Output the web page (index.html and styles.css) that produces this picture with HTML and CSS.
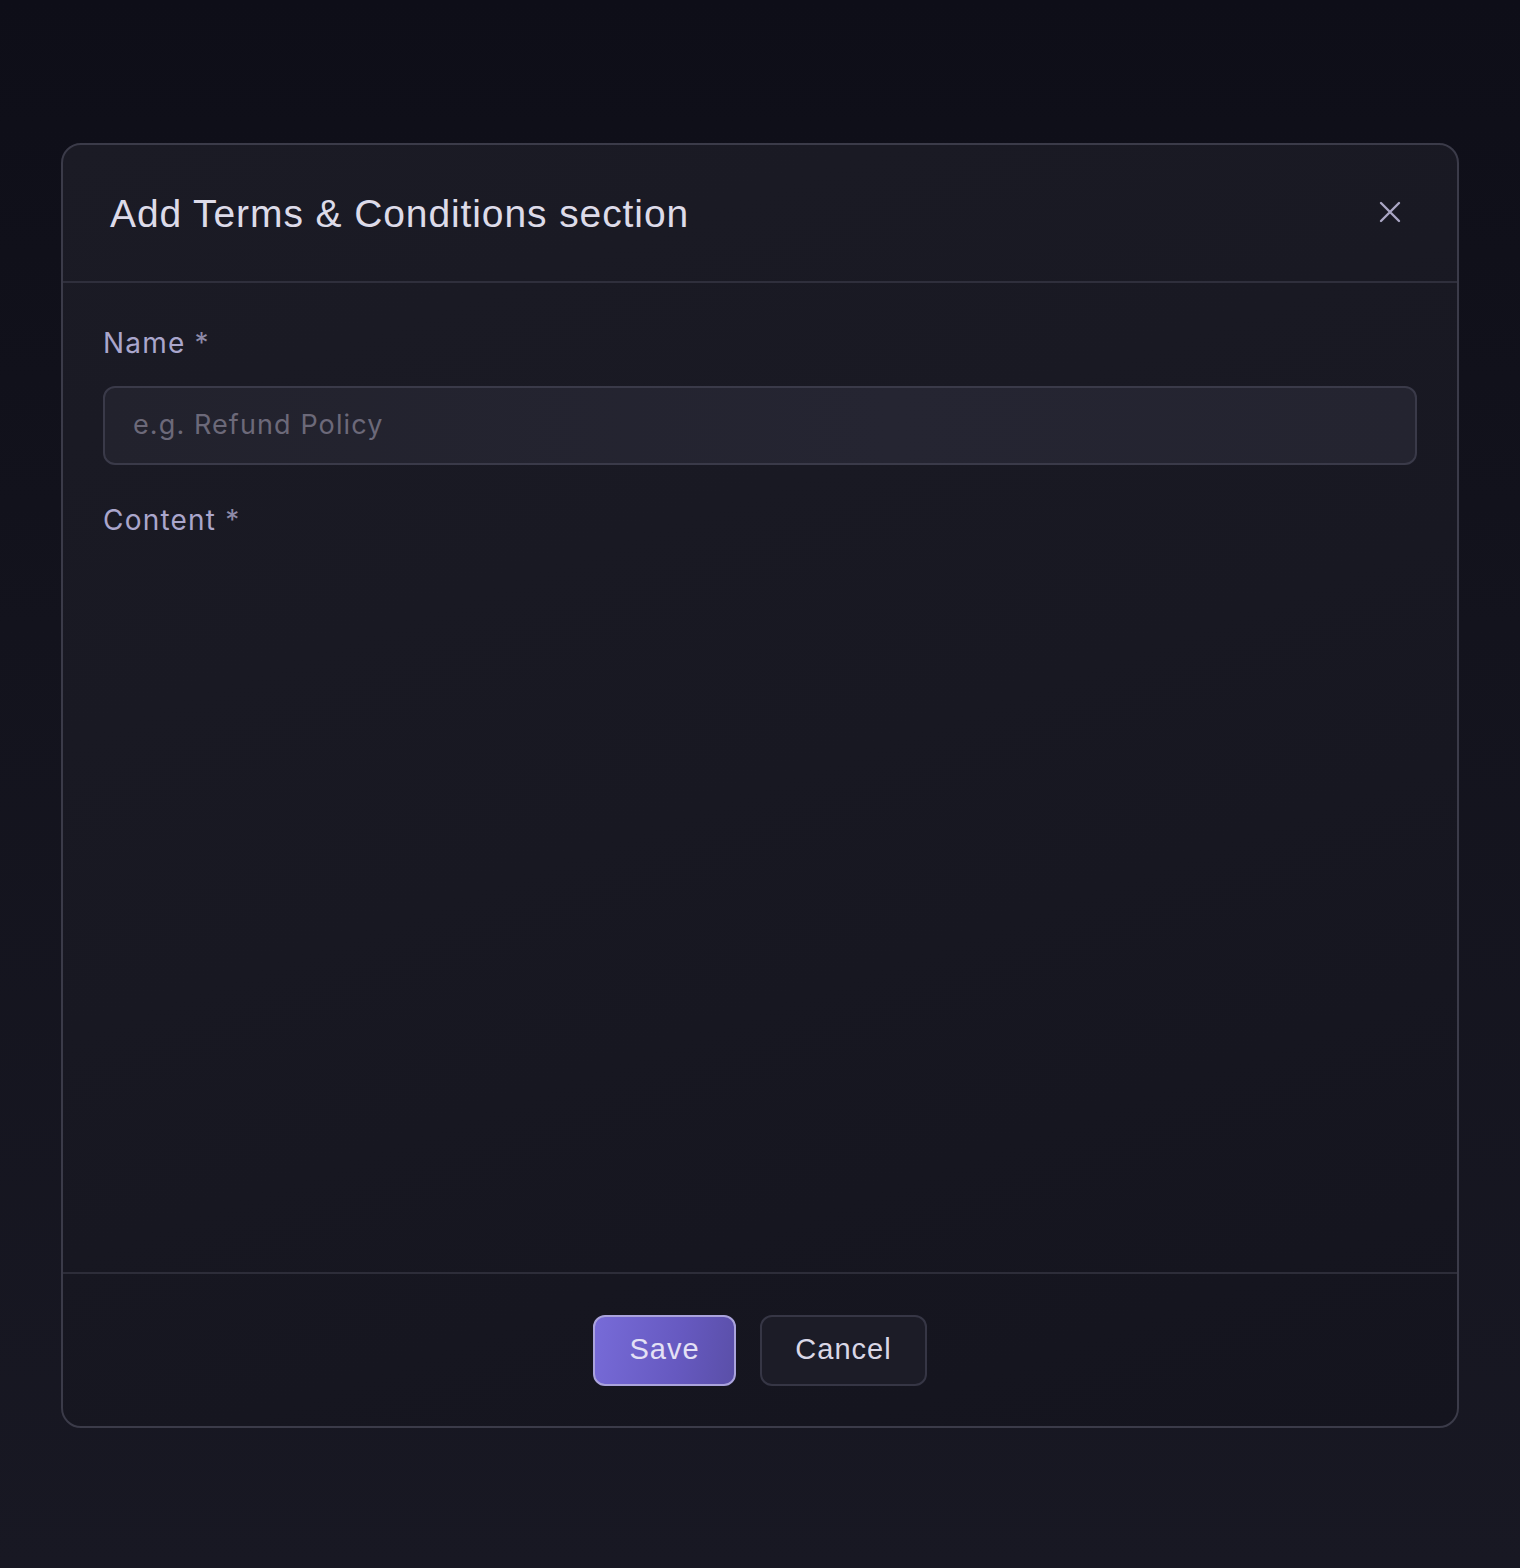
FILE: index.html
```html
<!DOCTYPE html>
<html lang="en">
<head>
<meta charset="utf-8">
<title>Add Terms &amp; Conditions section</title>
<link rel="stylesheet" href="styles.css">
</head>
<body>
<div class="backdrop">
  <div class="modal" role="dialog" aria-labelledby="modal-title">
    <header class="modal-header">
      <h2 id="modal-title" class="modal-title">Add Terms &amp; Conditions section</h2>
      <button class="close-btn" aria-label="Close">
        <svg width="22" height="22" viewBox="0 0 22 22" fill="none" stroke="currentColor" stroke-width="2.4" stroke-linecap="round">
          <path d="M2 2 L20 20 M20 2 L2 20"/>
        </svg>
      </button>
    </header>
    <div class="modal-body">
      <div class="field">
        <label class="label">Name <span class="req">*</span></label>
        <div class="input"><span class="placeholder">e.g. Refund Policy</span></div>
      </div>
      <div class="field">
        <label class="label">Content <span class="req">*</span></label>
      </div>
    </div>
    <footer class="modal-footer">
      <button class="btn btn-primary">Save</button>
      <button class="btn btn-secondary">Cancel</button>
    </footer>
  </div>
</div>
</body>
</html>
```

FILE: styles.css
```css
* { box-sizing: border-box; }
html, body { margin: 0; padding: 0; }
body {
  width: 1520px;
  height: 1568px;
  background: linear-gradient(180deg, #0e0e18 0%, #13131d 40%, #181823 100%);
  font-family: "Liberation Sans", Arial, sans-serif;
  overflow: hidden;
}
.backdrop {
  padding: 143px 61px 0 61px;
}
.modal {
  width: 1398px;
  height: 1285px;
  background: linear-gradient(160deg, #1b1b25 0%, #181822 50%, #14141e 100%);
  border: 2px solid #3b3b49;
  border-radius: 20px;
  display: flex;
  flex-direction: column;
  overflow: hidden;
}
.modal-header {
  height: 138px;
  flex: none;
  display: flex;
  align-items: center;
  justify-content: space-between;
  padding: 2px 47px 0 47px;
  border-bottom: 2px solid #2f2f3c;
}
.modal-title {
  margin: 0;
  font-family: "Liberation Sans", Arial, sans-serif;
  font-weight: 400;
  font-size: 39px;
  letter-spacing: 0.9px;
  color: #dddbe9;
}
.close-btn {
  background: none;
  border: 0;
  padding: 0;
  margin: 0 9px 4px 0;
  color: #aaa6c4;
  display: flex;
  cursor: pointer;
}
.modal-body {
  flex: 1;
  padding: 44px 40px 0 40px;
  display: flex;
  flex-direction: column;
  gap: 39px;
}
.field {
  display: flex;
  flex-direction: column;
  gap: 27px;
}
.label {
  font-family: Inter, "Noto Sans", sans-serif;
  font-size: 28px;
  line-height: 32px;
  letter-spacing: 1.2px;
  color: #aaa6cc;
}
.req { color: #8e8aa8; margin-left: 0; }
.input {
  height: 79px;
  border: 2px solid #3a3a49;
  border-radius: 12px;
  background: linear-gradient(90deg, #22222d 0%, #252532 60%, #242430 100%);
  display: flex;
  align-items: center;
  padding: 0 28px 2px 28px;
}
.placeholder {
  font-family: Inter, "Noto Sans", sans-serif;
  font-size: 27px;
  letter-spacing: 1.1px;
  color: #6c6979;
}
.modal-footer {
  height: 154px;
  flex: none;
  border-top: 2px solid #2d2d39;
  display: flex;
  justify-content: center;
  align-items: flex-start;
  padding: 41px 0 0 0;
  gap: 24px;
}
.btn {
  height: 71px;
  border-radius: 12px;
  font-family: "Liberation Sans", Arial, sans-serif;
  font-size: 29px;
  letter-spacing: 1px;
  padding: 0 0 2px 0;
  cursor: pointer;
}
.btn-primary {
  width: 143px;
  margin-left: 0;
  background: linear-gradient(100deg, #776bd8 0%, #6659c0 60%, #5a4fa8 100%);
  border: 2px solid #aaa3dc;
  color: #e4e1f5;
}
.btn-secondary {
  width: 167px;
  background: #1c1c27;
  border: 2px solid #363645;
  color: #d9d7e6;
}
```
